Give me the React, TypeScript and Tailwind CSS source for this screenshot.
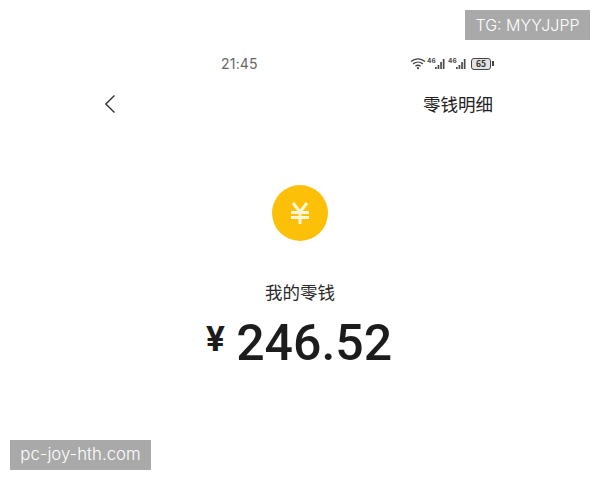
const cjk = '"Noto Sans CJK SC", "Noto Sans", sans-serif';

function SignalIcon() {
    return (
        <svg width="20" height="13" viewBox="0 0 20 13" className="text-[#4a4a4a]">
            <text x="0" y="5.5" fontSize="6.5" fontWeight="700" fill="currentColor" fontFamily="Inter, sans-serif">46</text>
            <rect x="8" y="10" width="1.7" height="2" fill="currentColor" />
            <rect x="10.6" y="8" width="1.7" height="4" fill="currentColor" />
            <rect x="13.2" y="5" width="1.7" height="7" fill="currentColor" />
            <rect x="15.8" y="2" width="1.7" height="10" fill="currentColor" />
        </svg>
    );
}

function WifiIcon() {
    return (
        <svg width="16" height="13" viewBox="0 0 16 13" fill="none" stroke="#444" strokeWidth="1.4">
            <path d="M1 4.6C5 1 11 1 15 4.6" />
            <path d="M3.2 6.9c2.8-2.4 6.8-2.4 9.6 0" />
            <path d="M5.4 9.2c1.5-1.2 3.7-1.2 5.2 0" />
            <circle cx="8" cy="11.2" r="1.1" fill="#444" stroke="none" />
        </svg>
    );
}

function BatteryIcon() {
    return (
        <div className="ml-[2px] flex items-center gap-[1px]">
            <div className="flex h-[12px] w-[20px] items-center justify-center rounded-[3px] border border-[#444] bg-[#e2e2e2] text-[8.5px] font-bold leading-none text-[#333]">
                65
            </div>
            <div className="h-[5px] w-[2px] bg-[#444]" />
        </div>
    );
}

function CoinIcon() {
    return (
        <div className="flex h-[56px] w-[56px] items-center justify-center rounded-full bg-[#fcc009]">
            <svg width="20" height="22" viewBox="0 0 20 22" fill="none" stroke="#fff6d9" strokeWidth="3">
                <path d="M3 1l7 9L17 1" />
                <path d="M1 10.5h18M1 15.5h18M10 10v12" />
            </svg>
        </div>
    );
}

export default function App() {
    return (
        <div className="relative h-[480px] w-[600px] overflow-hidden bg-white" style={{ fontFamily: cjk }}>
            <div className="flex h-[87px] items-end justify-between pb-[15px] pl-[221px] pr-[106px]">
                <span className="text-[14px] leading-[17px] text-[#666] tracking-[0.2px] font-['Inter']">21:45</span>
                <div className="mb-[2px] flex items-center gap-[1px]">
                    <WifiIcon />
                    <SignalIcon />
                    <SignalIcon />
                    <BatteryIcon />
                </div>
            </div>

            <div className="flex h-[34px] items-center justify-between pl-[104px] pr-[107px]">
                <svg width="12" height="20" viewBox="0 0 12 20" fill="none" stroke="#333" strokeWidth="1.4">
                    <path d="M10.5 1.5L1.8 10l8.7 8.5" />
                </svg>
                <span className="text-[17.5px] leading-[24px] text-[#222]">零钱明细</span>
            </div>

            <div className="flex flex-col items-center pt-[64px]">
                <CoinIcon />
                <div className="mt-[39px] text-[17.5px] leading-[24px] text-[#2a2a2a]">我的零钱</div>
                <div className="mt-[5px] flex items-center gap-[11px] pr-[2px] font-['Roboto'] leading-[60px] text-[#1c1c1c]">
                    <span className="mb-[8px] font-['Inter'] text-[34px] font-bold">¥</span>
                    <span className="text-[50px] font-medium">246.52</span>
                </div>
            </div>

            <div className="absolute right-[10px] top-[10px] flex h-[30px] w-[125px] items-center justify-center bg-[#a9a9a9] text-[16px] font-light text-white font-['Inter']">
                TG: MYYJJPP
            </div>
            <div className="absolute bottom-[10px] left-[10px] flex h-[30px] w-[141px] items-center justify-center bg-[#a9a9a9] text-[16.8px] font-light text-white font-['Inter']">
                pc-joy-hth.com
            </div>
        </div>
    );
}
